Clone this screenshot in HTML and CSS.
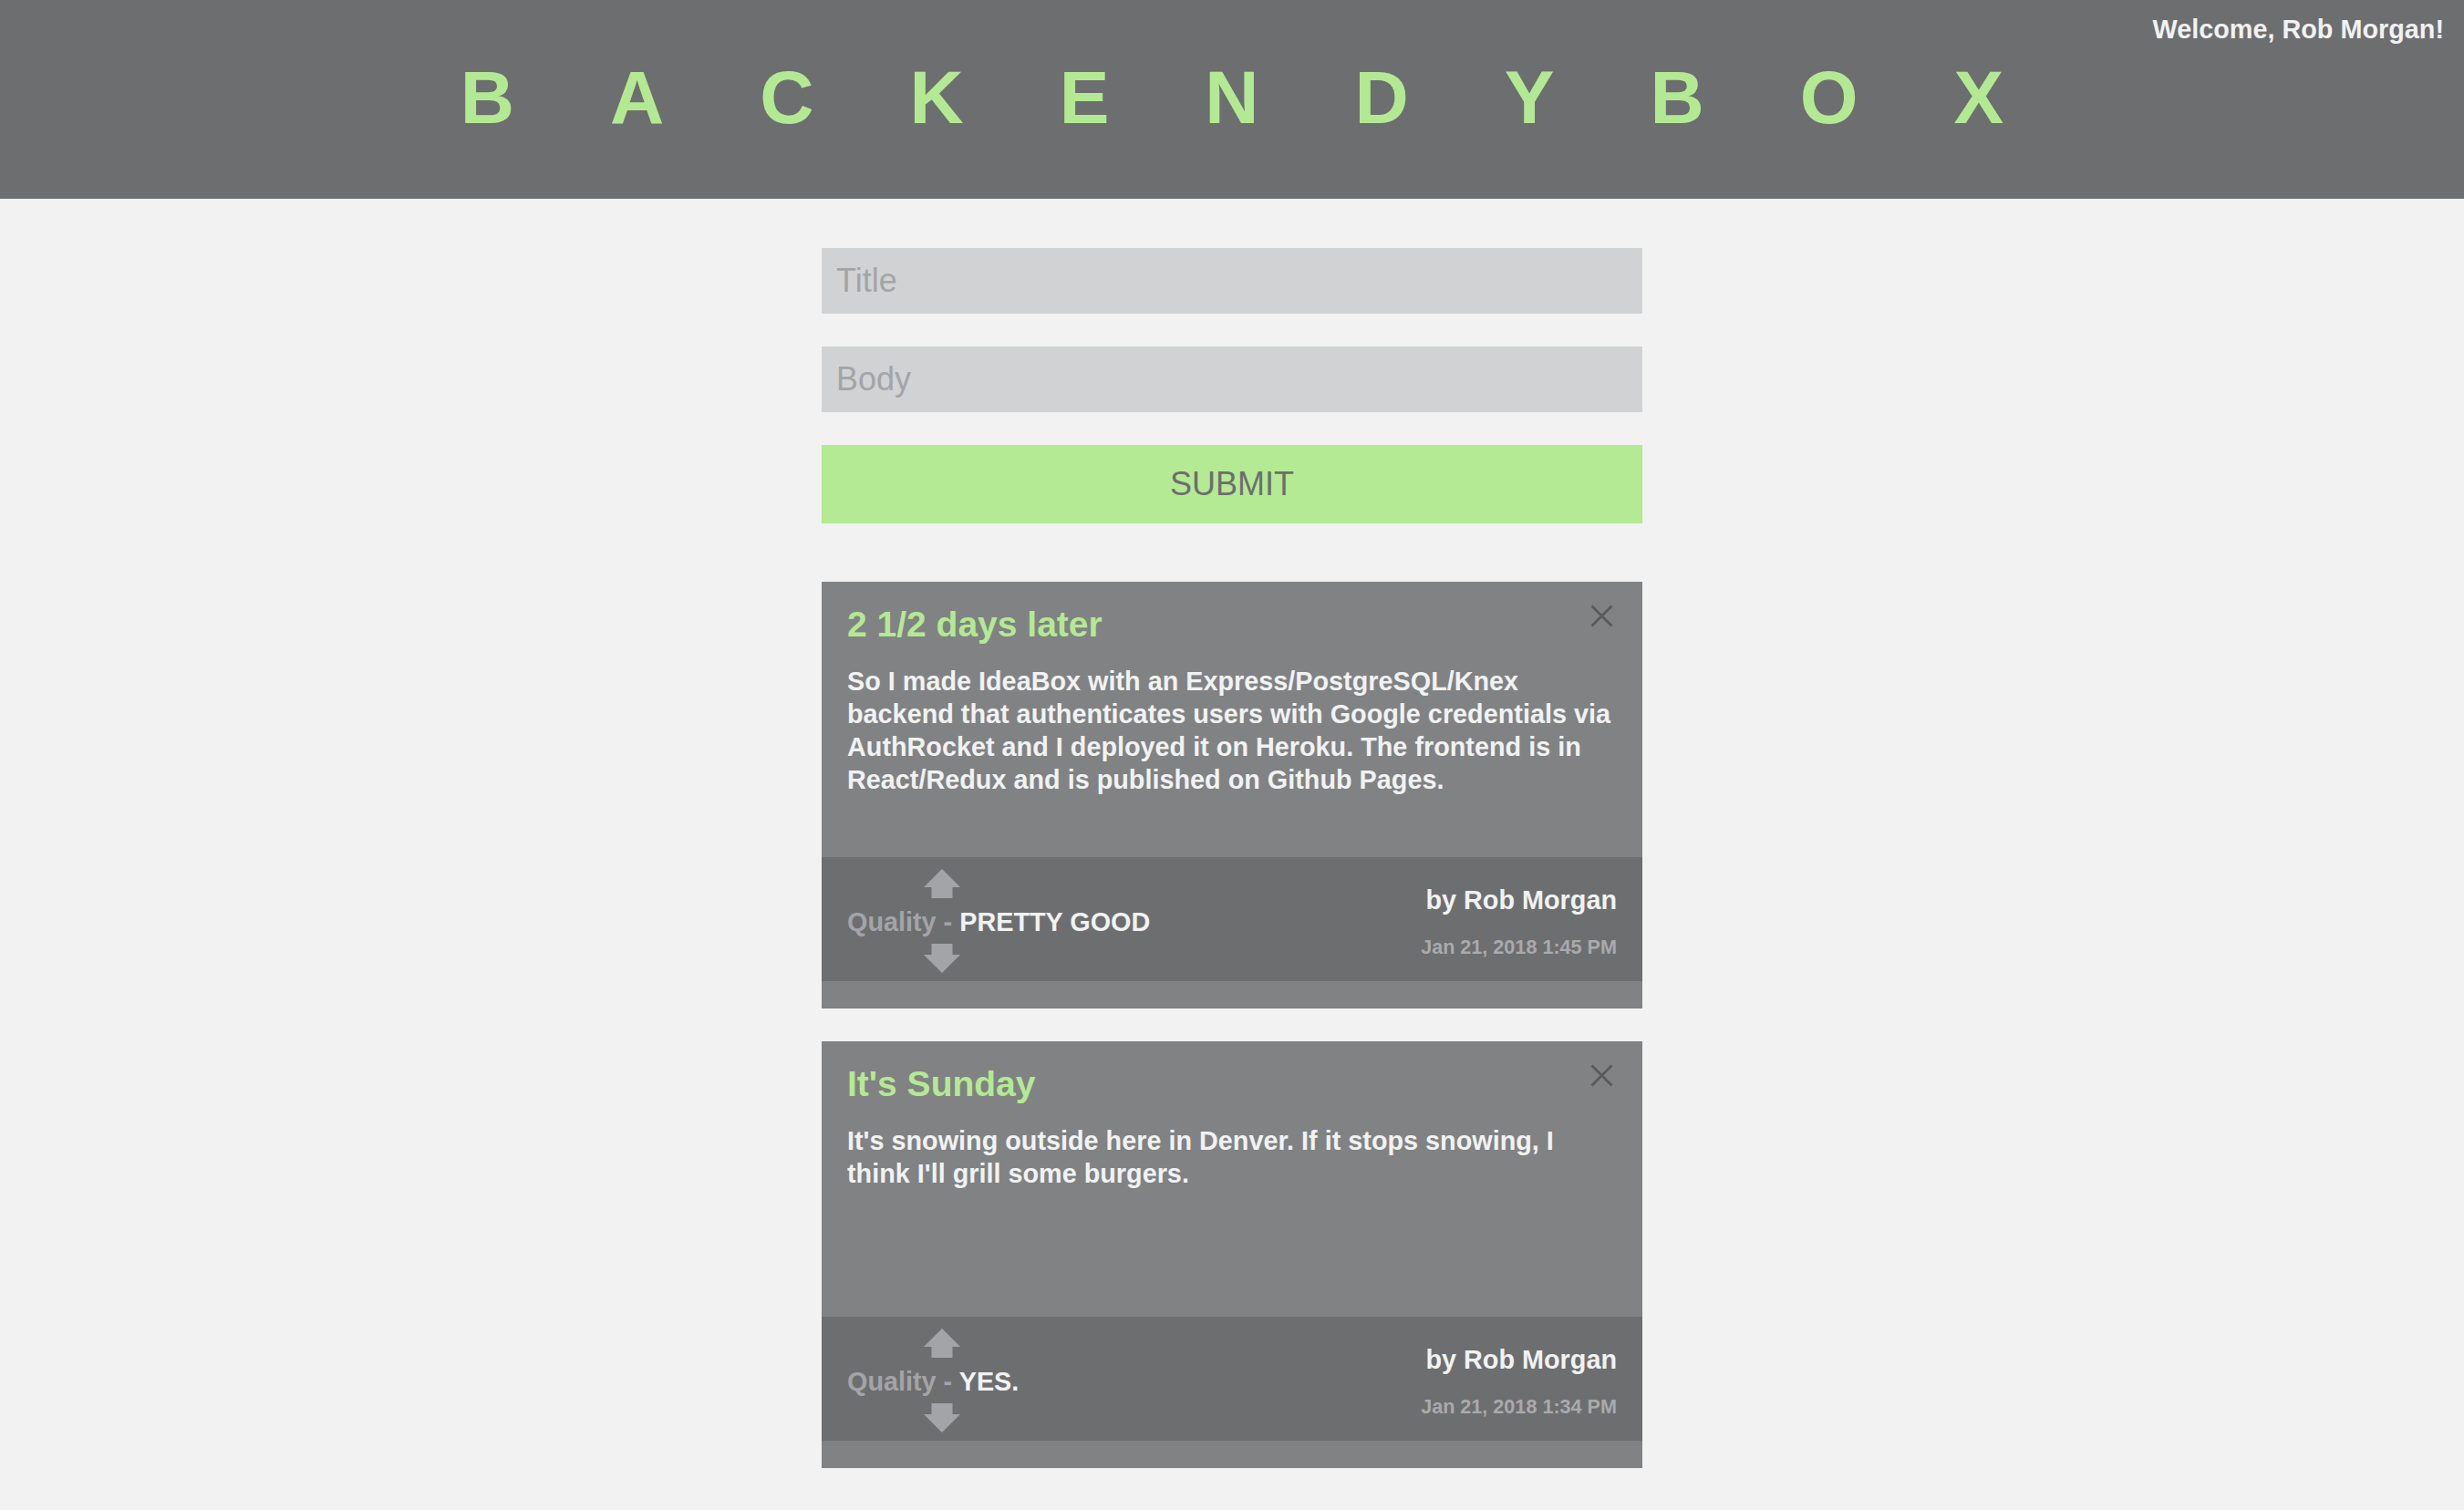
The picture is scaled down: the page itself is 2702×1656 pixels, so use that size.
FILE: index.html
```html
<!DOCTYPE html>
<html lang="en">
<head>
<meta charset="utf-8">
<title>BackendyBox</title>
<link rel="stylesheet" href="styles.css">
</head>
<body>
<header class="top">
  <div class="welcome">Welcome, Rob Morgan!</div>
  <h1 class="logo">BACKENDYBOX</h1>
</header>
<main class="wrap">
  <form class="idea-form">
    <input class="field" type="text" placeholder="Title">
    <input class="field" type="text" placeholder="Body">
    <button class="submit" type="button">SUBMIT</button>
  </form>
  <section class="ideas">
    <article class="card">
      <div class="card-main">
        <div class="card-head">
          <h2 class="card-title">2 1/2 days later</h2>
          <button class="close" type="button" aria-label="Delete"><svg viewBox="0 0 25 25" width="25" height="25"><path d="M1.5 1.5 L23.5 23.5 M23.5 1.5 L1.5 23.5" stroke="#58595b" stroke-width="2.8" fill="none"/></svg></button>
        </div>
        <p class="card-body">So I made IdeaBox with an Express/PostgreSQL/Knex backend that authenticates users with Google credentials via AuthRocket and I deployed it on Heroku. The frontend is in React/Redux and is published on Github Pages.</p>
      </div>
      <div class="card-foot">
        <div class="quality">
          <svg class="arrow" viewBox="0 0 40 32"><polygon points="20,0 40,20 31.5,20 31.5,32 8.5,32 8.5,20 0,20" fill="#a3a4a7"/></svg>
          <p class="q-line"><span class="q-label">Quality - </span><span class="q-value">PRETTY GOOD</span></p>
          <svg class="arrow" viewBox="0 0 40 32"><polygon points="8.5,0 31.5,0 31.5,12 40,12 20,32 0,12 8.5,12" fill="#a3a4a7"/></svg>
        </div>
        <div class="meta">
          <p class="author">by Rob Morgan</p>
          <p class="date">Jan 21, 2018 1:45 PM</p>
        </div>
      </div>
    </article>
    <article class="card">
      <div class="card-main">
        <div class="card-head">
          <h2 class="card-title">It's Sunday</h2>
          <button class="close" type="button" aria-label="Delete"><svg viewBox="0 0 25 25" width="25" height="25"><path d="M1.5 1.5 L23.5 23.5 M23.5 1.5 L1.5 23.5" stroke="#58595b" stroke-width="2.8" fill="none"/></svg></button>
        </div>
        <p class="card-body">It's snowing outside here in Denver. If it stops snowing, I think I'll grill some burgers.</p>
      </div>
      <div class="card-foot">
        <div class="quality">
          <svg class="arrow" viewBox="0 0 40 32"><polygon points="20,0 40,20 31.5,20 31.5,32 8.5,32 8.5,20 0,20" fill="#a3a4a7"/></svg>
          <p class="q-line"><span class="q-label">Quality - </span><span class="q-value">YES.</span></p>
          <svg class="arrow" viewBox="0 0 40 32"><polygon points="8.5,0 31.5,0 31.5,12 40,12 20,32 0,12 8.5,12" fill="#a3a4a7"/></svg>
        </div>
        <div class="meta">
          <p class="author">by Rob Morgan</p>
          <p class="date">Jan 21, 2018 1:34 PM</p>
        </div>
      </div>
    </article>
  </section>
</main>
</body>
</html>
```

FILE: styles.css
```css
html, body {
  margin: 0;
  padding: 0;
}

body {
  background: #f1f2f1;
  font-family: "Liberation Sans", Arial, Helvetica, sans-serif;
}

.top {
  height: 218px;
  box-sizing: border-box;
  background: #6d6e70;
  padding: 18px 22px 0;
}

.welcome {
  text-align: right;
  font-weight: bold;
  font-size: 28.8px;
  line-height: 29px;
  color: #f1f2f2;
}

.logo {
  margin: 19px 0 0;
  text-align: center;
  font-weight: bold;
  font-size: 82px;
  line-height: 82px;
  letter-spacing: 105px;
  padding-left: 105px;
  color: #b4e993;
}

.wrap {
  width: 900px;
  margin: 54px auto 0;
}

.idea-form {
  display: flex;
  flex-direction: column;
  gap: 36px;
  margin: 0;
}

.field {
  display: block;
  width: 100%;
  height: 72px;
  box-sizing: border-box;
  border: 0;
  outline: none;
  background: #d1d2d4;
  padding: 0 16px;
  font-family: "Liberation Sans", Arial, sans-serif;
  font-size: 36px;
  color: #6d6e70;
}

.field::placeholder {
  color: #a3a4a7;
}

.submit {
  display: block;
  width: 100%;
  height: 86px;
  border: 0;
  padding: 0;
  background: #b4ea93;
  font-family: "Liberation Sans", Arial, sans-serif;
  font-size: 36px;
  color: #6d6e70;
  cursor: pointer;
}

.ideas {
  margin-top: 64px;
  display: flex;
  flex-direction: column;
  gap: 36px;
}

.card {
  height: 468px;
  box-sizing: border-box;
  background: #818284;
  padding-bottom: 30px;
  display: flex;
  flex-direction: column;
}

.card-main {
  flex: 1;
  padding: 24px 28px 0;
}

.card-head {
  display: flex;
  justify-content: space-between;
  align-items: flex-start;
}

.card-title {
  margin: 0;
  font-weight: bold;
  font-size: 39px;
  line-height: 46px;
  color: #b4e993;
}

.close {
  margin: 1px 4px 0 0;
  padding: 0;
  border: 0;
  background: none;
  width: 25px;
  height: 25px;
  cursor: pointer;
}

.close svg {
  display: block;
}

.card-body {
  margin: 21px 0 0;
  font-weight: bold;
  font-size: 28.8px;
  line-height: 36px;
  color: #f1f2f2;
}

.card-foot {
  height: 136px;
  box-sizing: border-box;
  background: #6d6e70;
  display: flex;
  justify-content: space-between;
  padding: 0 28px;
}

.quality {
  padding-top: 13px;
  display: flex;
  flex-direction: column;
}

.arrow {
  display: block;
  width: 40px;
  height: 32px;
  margin-left: 84px;
}

.q-line {
  margin: 10px 0 8px;
  font-weight: bold;
  font-size: 28.8px;
  line-height: 32px;
}

.q-label {
  color: #a3a4a7;
}

.q-value {
  color: #f1f2f2;
}

.meta {
  padding-top: 31px;
  text-align: right;
}

.author {
  margin: 0;
  font-weight: bold;
  font-size: 28.8px;
  line-height: 32px;
  color: #f1f2f2;
}

.date {
  margin: 24px 0 0;
  font-weight: bold;
  font-size: 21.6px;
  line-height: 24px;
  color: #a9aaac;
}
```
